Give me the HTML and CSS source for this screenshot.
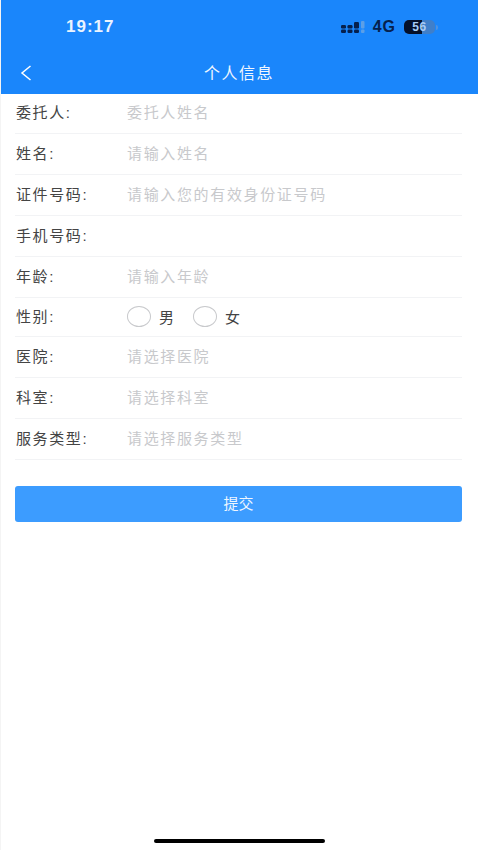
FILE: index.html
```html
<!DOCTYPE html>
<html lang="zh-CN">

<head>
    <meta charset="UTF-8">
    <meta name="viewport" content="width=device-width, initial-scale=1.0">
    <title>个人信息</title>
    <link rel="stylesheet" href="styles.css">
</head>

<body>
    <div class="page">
        <div class="header">
            <div class="status-bar">
                <span class="time">19:17</span>
                <div class="status-icons">
                    <svg class="signal" width="25" height="13" viewBox="0 0 25 13">
                        <g fill="#06204c">
                            <rect x="0" y="4" width="5" height="3.5" rx="1.2"/>
                            <rect x="0" y="8.5" width="5" height="3.5" rx="1.2"/>
                            <rect x="6.5" y="4" width="5" height="3.5" rx="1.2"/>
                            <rect x="6.5" y="8.5" width="5" height="3.5" rx="1.2"/>
                            <rect x="13" y="1" width="5" height="6.5" rx="1.2"/>
                            <rect x="13" y="8.5" width="5" height="3.5" rx="1.2"/>
                        </g>
                        <g fill="#5c9fe6">
                            <rect x="20" y="0" width="3.5" height="7.5" rx="1"/>
                            <rect x="20" y="8.5" width="3.5" height="3.5" rx="1"/>
                        </g>
                    </svg>
                    <span class="network">4G</span>
                    <div class="battery">
                        <div class="battery-level"></div>
                        <span class="battery-text">56</span>
                    </div>
                    <div class="battery-cap"></div>
                </div>
            </div>
            <div class="nav-bar">
                <svg class="back" width="12" height="18" viewBox="0 0 12 18">
                    <path d="M10.5 2 L2 9 L10.5 16" fill="none" stroke="#fff" stroke-width="1.5"/>
                </svg>
                <span class="nav-title">个人信息</span>
            </div>
        </div>

        <form class="form">
            <div class="row row-first">
                <label>委托人:</label>
                <input type="text" placeholder="委托人姓名">
            </div>
            <div class="row">
                <label>姓名:</label>
                <input type="text" placeholder="请输入姓名">
            </div>
            <div class="row">
                <label>证件号码:</label>
                <input type="text" placeholder="请输入您的有效身份证号码">
            </div>
            <div class="row">
                <label>手机号码:</label>
                <input type="text">
            </div>
            <div class="row">
                <label>年龄:</label>
                <input type="text" placeholder="请输入年龄">
            </div>
            <div class="row row-gender">
                <label>性别:</label>
                <div class="radio-group">
                    <div class="radio"></div>
                    <span>男</span>
                    <div class="radio radio-second"></div>
                    <span>女</span>
                </div>
            </div>
            <div class="row">
                <label>医院:</label>
                <input type="text" placeholder="请选择医院">
            </div>
            <div class="row">
                <label>科室:</label>
                <input type="text" placeholder="请选择科室">
            </div>
            <div class="row">
                <label>服务类型:</label>
                <input type="text" placeholder="请选择服务类型">
            </div>
            <button type="button" class="submit">提交</button>
        </form>

        <div class="home-indicator"></div>
    </div>
</body>

</html>
```

FILE: styles.css
```css
* {
    box-sizing: border-box;
}

body {
    margin: 0;
    background: #fff;
    font-family: "Liberation Sans", "Noto Sans CJK SC", sans-serif;
}

.page {
    width: 478px;
    height: 850px;
    display: flex;
    flex-direction: column;
    overflow: hidden;
    border-left: 1px solid #f4f4f4;
}

.header {
    height: 94px;
    margin-left: -1px;
    background: #1a86fb;
    color: #fff;
}

.status-bar {
    height: 54px;
    display: flex;
    justify-content: space-between;
    align-items: center;
    padding: 0 40px 0 66px;
}

.time {
    font-size: 17px;
    font-weight: bold;
    letter-spacing: 1px;
    color: #eaf4ff;
}

.status-icons {
    display: flex;
    align-items: center;
}

.signal {
    margin-right: 7px;
}

.network {
    font-size: 16px;
    font-weight: bold;
    letter-spacing: 1px;
    color: #06204c;
    margin-right: 8px;
}

.battery {
    width: 31px;
    height: 14px;
    border-radius: 5px;
    background: #3f7fca;
    overflow: hidden;
    display: flex;
    align-items: center;
    justify-content: center;
    position: relative;
}

.battery-level {
    position: absolute;
    left: 0;
    top: 0;
    bottom: 0;
    width: 18px;
    background: #04102a;
}

.battery-text {
    position: relative;
    font-size: 12px;
    font-weight: bold;
    color: #a9cdf5;
    letter-spacing: 0.5px;
}

.battery-cap {
    width: 2px;
    height: 5px;
    margin-left: 1px;
    border-radius: 0 2px 2px 0;
    background: #4f93e0;
}

.nav-bar {
    height: 40px;
    display: flex;
    align-items: center;
    justify-content: center;
    position: relative;
    padding-bottom: 4px;
}

.back {
    position: absolute;
    left: 20px;
    top: 10px;
}

.nav-title {
    font-size: 16px;
    letter-spacing: 1.5px;
    color: #f0f7ff;
}

.form {
    padding: 0 16px 0 14px;
}

.row {
    height: 41px;
    display: flex;
    align-items: center;
    padding-bottom: 2px;
    border-bottom: 1px solid #f2f3f5;
}

.row-first {
    height: 40px;
}

.row-gender {
    height: 39px;
}

.row label {
    width: 112px;
    flex-shrink: 0;
    padding: 0 0 2px 1px;
    font-size: 15px;
    letter-spacing: 1.6px;
    color: #444;
}

.row input {
    flex: 1;
    min-width: 0;
    border: none;
    outline: none;
    padding: 0;
    background: none;
    font: inherit;
    font-size: 15px;
    letter-spacing: 1.65px;
    color: #444;
}

.row input::placeholder {
    color: #c8c9cc;
    opacity: 1;
}

.radio-group {
    display: flex;
    align-items: center;
    font-size: 15px;
    color: #444;
}

.radio {
    width: 24px;
    height: 21px;
    border: 1px solid #c8c9cc;
    border-radius: 50%;
    margin-right: 8px;
}

.radio-second {
    margin-left: 19px;
}

.submit {
    display: block;
    width: 100%;
    height: 36px;
    margin-top: 26px;
    padding: 0 0 3px;
    border: none;
    border-radius: 3px;
    background: #3c9cff;
    color: #eef6ff;
    font: inherit;
    font-size: 15px;
}

.home-indicator {
    width: 171px;
    height: 4px;
    margin: auto auto 7px;
    border-radius: 2px;
    background: #000;
}
```
